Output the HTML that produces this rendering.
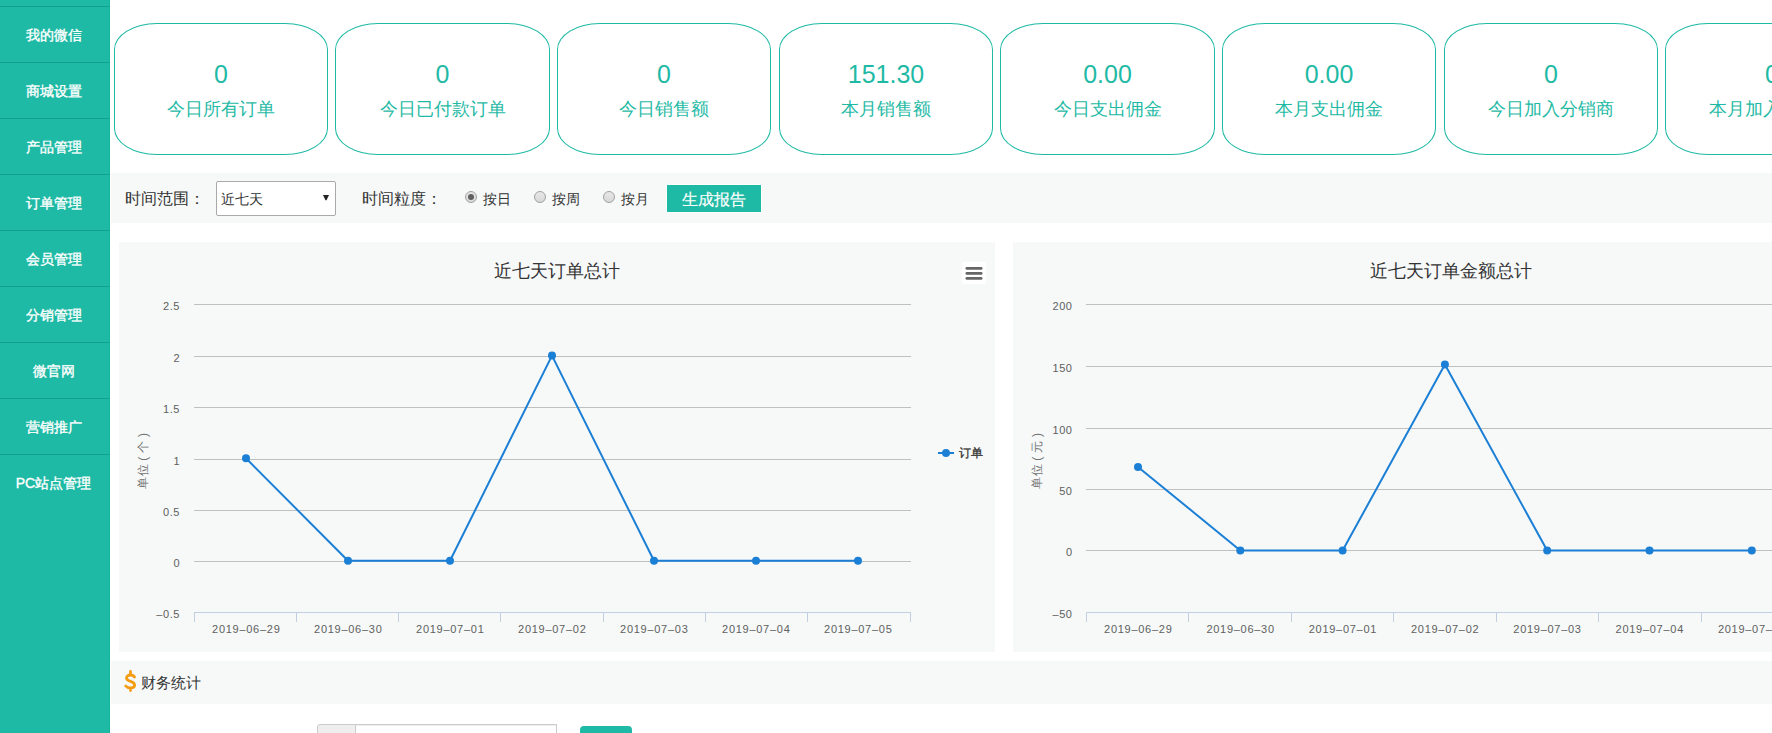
<!DOCTYPE html><html><head><meta charset="utf-8"><style>
*{box-sizing:border-box}
body{margin:0;width:1772px;height:733px;overflow:hidden;background:#fff;font-family:"Liberation Sans",sans-serif;position:relative}
.sb{position:absolute;left:0;top:0;width:110px;height:733px;background:#1fbaa5;border-right:1px solid #12b69d}
.sep{position:absolute;left:0;width:110px;height:1px;background:#14a08e}
.mi{position:absolute;left:0;width:107px;height:20px;line-height:20px;text-align:center;color:#fff;font-size:14px;-webkit-text-stroke:0.35px #fff}
.card{position:absolute;top:23px;width:214px;height:132px;border:1px solid #1fbaa5;border-radius:20%;color:#1fbaa5;text-align:center}
.num{position:absolute;left:0;width:100%;top:36px;font-size:25px;line-height:28px}
.lab{position:absolute;left:0;width:100%;top:73px;font-size:18px;line-height:24px;white-space:nowrap}
.bar{position:absolute;left:111px;width:1661px;background:#f6f9f8}
.t{position:absolute;white-space:nowrap;color:#333}
.panel{position:absolute;top:242px;width:876px;height:410px;background:#f6f9f8}
</style></head><body>

<div class="sb">
<div class="sep" style="top:6px"></div>
<div class="sep" style="top:62px"></div>
<div class="sep" style="top:118px"></div>
<div class="sep" style="top:174px"></div>
<div class="sep" style="top:230px"></div>
<div class="sep" style="top:286px"></div>
<div class="sep" style="top:342px"></div>
<div class="sep" style="top:398px"></div>
<div class="sep" style="top:454px"></div>
<div class="mi" style="top:25px">我的微信</div>
<div class="mi" style="top:81px">商城设置</div>
<div class="mi" style="top:137px">产品管理</div>
<div class="mi" style="top:193px">订单管理</div>
<div class="mi" style="top:249px">会员管理</div>
<div class="mi" style="top:305px">分销管理</div>
<div class="mi" style="top:361px">微官网</div>
<div class="mi" style="top:417px">营销推广</div>
<div class="mi" style="top:473px">PC站点管理</div>
</div>
<div class="card" style="left:114px;width:214px"><div class="num">0</div><div class="lab">今日所有订单</div></div>
<div class="card" style="left:335px;width:215px"><div class="num">0</div><div class="lab">今日已付款订单</div></div>
<div class="card" style="left:557px;width:214px"><div class="num">0</div><div class="lab">今日销售额</div></div>
<div class="card" style="left:779px;width:214px"><div class="num">151.30</div><div class="lab">本月销售额</div></div>
<div class="card" style="left:1000px;width:215px"><div class="num">0.00</div><div class="lab">今日支出佣金</div></div>
<div class="card" style="left:1222px;width:214px"><div class="num">0.00</div><div class="lab">本月支出佣金</div></div>
<div class="card" style="left:1444px;width:214px"><div class="num">0</div><div class="lab">今日加入分销商</div></div>
<div class="card" style="left:1665px;width:214px"><div class="num">0</div><div class="lab">本月加入分销商</div></div>
<div class="bar" style="top:173px;height:50px"></div>
<div class="t" style="left:125px;top:189px;font-size:16px;line-height:20px">时间范围：</div>
<div style="position:absolute;left:216px;top:181px;width:120px;height:35px;border:1px solid #a9a9a9;border-radius:2px;background:#fff"></div>
<div class="t" style="left:221px;top:190px;font-size:14px;line-height:18px">近七天</div>
<svg style="position:absolute;left:323px;top:195px" width="7" height="6"><path d="M0 0H6L3.5 5.2H2.5Z" fill="#222"/></svg>
<div class="t" style="left:362px;top:189px;font-size:16px;line-height:20px">时间粒度：</div>
<div style="position:absolute;left:465px;top:191px;width:12px;height:12px;border-radius:50%;border:1px solid #a0a0a0;background:linear-gradient(#e8e8e8,#d8d8d8)"></div>
<div style="position:absolute;left:468px;top:194px;width:6px;height:6px;border-radius:50%;background:#606060"></div>
<div class="t" style="left:483px;top:190px;font-size:14px;line-height:18px">按日</div>
<div style="position:absolute;left:534px;top:191px;width:12px;height:12px;border-radius:50%;border:1px solid #a0a0a0;background:linear-gradient(#e8e8e8,#d8d8d8)"></div>
<div class="t" style="left:552px;top:190px;font-size:14px;line-height:18px">按周</div>
<div style="position:absolute;left:603px;top:191px;width:12px;height:12px;border-radius:50%;border:1px solid #a0a0a0;background:linear-gradient(#e8e8e8,#d8d8d8)"></div>
<div class="t" style="left:621px;top:190px;font-size:14px;line-height:18px">按月</div>
<div style="position:absolute;left:666px;top:184px;width:96px;height:29px;border:1px solid #fff;background:#1fbaa5"></div>
<div class="t" style="left:682px;top:190px;font-size:16px;line-height:20px;color:#fff;-webkit-text-stroke:0.15px #fff">生成报告</div>
<div class="panel" style="left:119px">
<svg width="876" height="410" style="position:absolute;left:0;top:0;font-family:'Liberation Sans',sans-serif">
<text x="438" y="35" text-anchor="middle" font-size="18" fill="#333">近七天订单总计</text>
<rect x="75.0" y="62" width="717.0" height="1" fill="#c0c0c0"/>
<text x="61.1" y="67.8" text-anchor="end" font-size="11" letter-spacing="0.6" fill="#606060">2.5</text>
<rect x="75.0" y="114" width="717.0" height="1" fill="#c0c0c0"/>
<text x="61.1" y="119.8" text-anchor="end" font-size="11" letter-spacing="0.6" fill="#606060">2</text>
<rect x="75.0" y="165" width="717.0" height="1" fill="#c0c0c0"/>
<text x="61.1" y="170.8" text-anchor="end" font-size="11" letter-spacing="0.6" fill="#606060">1.5</text>
<rect x="75.0" y="217" width="717.0" height="1" fill="#c0c0c0"/>
<text x="61.1" y="222.8" text-anchor="end" font-size="11" letter-spacing="0.6" fill="#606060">1</text>
<rect x="75.0" y="268" width="717.0" height="1" fill="#c0c0c0"/>
<text x="61.1" y="273.8" text-anchor="end" font-size="11" letter-spacing="0.6" fill="#606060">0.5</text>
<rect x="75.0" y="319" width="717.0" height="1" fill="#c0c0c0"/>
<text x="61.1" y="324.8" text-anchor="end" font-size="11" letter-spacing="0.6" fill="#606060">0</text>
<text x="61.1" y="375.8" text-anchor="end" font-size="11" letter-spacing="0.6" fill="#606060">–0.5</text>
<rect x="75.0" y="370" width="717.0" height="1" fill="#c0d0e0"/>
<rect x="75" y="370" width="1" height="10" fill="#c0d0e0"/>
<rect x="177" y="370" width="1" height="10" fill="#c0d0e0"/>
<rect x="279" y="370" width="1" height="10" fill="#c0d0e0"/>
<rect x="381" y="370" width="1" height="10" fill="#c0d0e0"/>
<rect x="484" y="370" width="1" height="10" fill="#c0d0e0"/>
<rect x="586" y="370" width="1" height="10" fill="#c0d0e0"/>
<rect x="688" y="370" width="1" height="10" fill="#c0d0e0"/>
<rect x="791" y="370" width="1" height="10" fill="#c0d0e0"/>
<text x="127.3" y="391.1" text-anchor="middle" font-size="11" letter-spacing="0.72" fill="#606060">2019–06–29</text>
<text x="229.3" y="391.1" text-anchor="middle" font-size="11" letter-spacing="0.72" fill="#606060">2019–06–30</text>
<text x="331.3" y="391.1" text-anchor="middle" font-size="11" letter-spacing="0.72" fill="#606060">2019–07–01</text>
<text x="433.3" y="391.1" text-anchor="middle" font-size="11" letter-spacing="0.72" fill="#606060">2019–07–02</text>
<text x="535.3" y="391.1" text-anchor="middle" font-size="11" letter-spacing="0.72" fill="#606060">2019–07–03</text>
<text x="637.3" y="391.1" text-anchor="middle" font-size="11" letter-spacing="0.72" fill="#606060">2019–07–04</text>
<text x="739.3" y="391.1" text-anchor="middle" font-size="11" letter-spacing="0.72" fill="#606060">2019–07–05</text>
<text transform="translate(24.0,241.0) rotate(-90)" text-anchor="middle" dominant-baseline="central" font-size="12" fill="#707070">单</text>
<text transform="translate(24.0,228.0) rotate(-90)" text-anchor="middle" dominant-baseline="central" font-size="12" fill="#707070">位</text>
<text transform="translate(24.0,216.7) rotate(-90)" text-anchor="middle" dominant-baseline="central" font-size="12" fill="#707070">(</text>
<text transform="translate(24.0,205.3) rotate(-90)" text-anchor="middle" dominant-baseline="central" font-size="12" fill="#707070">个</text>
<text transform="translate(24.0,193.0) rotate(-90)" text-anchor="middle" dominant-baseline="central" font-size="12" fill="#707070">)</text>
<polyline points="127.0,216.3 229.0,318.8 331.0,318.8 433.0,113.6 535.0,318.8 637.0,318.8 739.0,318.8" fill="none" stroke="#1c7fd6" stroke-width="2" stroke-linejoin="round"/>
<circle cx="127.0" cy="216.3" r="4" fill="#1c7fd6"/>
<circle cx="229.0" cy="318.8" r="4" fill="#1c7fd6"/>
<circle cx="331.0" cy="318.8" r="4" fill="#1c7fd6"/>
<circle cx="433.0" cy="113.6" r="4" fill="#1c7fd6"/>
<circle cx="535.0" cy="318.8" r="4" fill="#1c7fd6"/>
<circle cx="637.0" cy="318.8" r="4" fill="#1c7fd6"/>
<circle cx="739.0" cy="318.8" r="4" fill="#1c7fd6"/>
<rect x="819" y="210" width="16" height="2" fill="#1c7fd6"/>
<circle cx="827" cy="211" r="4" fill="#1c7fd6"/>
<text x="840" y="214.5" font-size="12" fill="#333" stroke="#333" stroke-width="0.3">订单</text>
<rect x="843" y="20" width="24" height="22" rx="2" fill="#fff"/>
<rect x="846.5" y="25.0" width="17" height="2.7" rx="1.3" fill="#666"/>
<rect x="846.5" y="30.0" width="17" height="2.7" rx="1.3" fill="#666"/>
<rect x="846.5" y="35.1" width="17" height="2.7" rx="1.3" fill="#666"/>
</svg></div>
<div class="panel" style="left:1013px">
<svg width="876" height="410" style="position:absolute;left:0;top:0;font-family:'Liberation Sans',sans-serif">
<text x="438" y="35" text-anchor="middle" font-size="18" fill="#333">近七天订单金额总计</text>
<rect x="73.0" y="62" width="718.0" height="1" fill="#c0c0c0"/>
<text x="59.6" y="67.8" text-anchor="end" font-size="11" letter-spacing="0.6" fill="#606060">200</text>
<rect x="73.0" y="124" width="718.0" height="1" fill="#c0c0c0"/>
<text x="59.6" y="129.8" text-anchor="end" font-size="11" letter-spacing="0.6" fill="#606060">150</text>
<rect x="73.0" y="186" width="718.0" height="1" fill="#c0c0c0"/>
<text x="59.6" y="191.8" text-anchor="end" font-size="11" letter-spacing="0.6" fill="#606060">100</text>
<rect x="73.0" y="247" width="718.0" height="1" fill="#c0c0c0"/>
<text x="59.6" y="252.8" text-anchor="end" font-size="11" letter-spacing="0.6" fill="#606060">50</text>
<rect x="73.0" y="308" width="718.0" height="1" fill="#c0c0c0"/>
<text x="59.6" y="313.8" text-anchor="end" font-size="11" letter-spacing="0.6" fill="#606060">0</text>
<text x="59.6" y="375.8" text-anchor="end" font-size="11" letter-spacing="0.6" fill="#606060">–50</text>
<rect x="73.0" y="370" width="718.0" height="1" fill="#c0d0e0"/>
<rect x="73" y="370" width="1" height="10" fill="#c0d0e0"/>
<rect x="175" y="370" width="1" height="10" fill="#c0d0e0"/>
<rect x="278" y="370" width="1" height="10" fill="#c0d0e0"/>
<rect x="380" y="370" width="1" height="10" fill="#c0d0e0"/>
<rect x="483" y="370" width="1" height="10" fill="#c0d0e0"/>
<rect x="585" y="370" width="1" height="10" fill="#c0d0e0"/>
<rect x="688" y="370" width="1" height="10" fill="#c0d0e0"/>
<rect x="790" y="370" width="1" height="10" fill="#c0d0e0"/>
<text x="125.3" y="391.1" text-anchor="middle" font-size="11" letter-spacing="0.72" fill="#606060">2019–06–29</text>
<text x="227.6" y="391.1" text-anchor="middle" font-size="11" letter-spacing="0.72" fill="#606060">2019–06–30</text>
<text x="329.9" y="391.1" text-anchor="middle" font-size="11" letter-spacing="0.72" fill="#606060">2019–07–01</text>
<text x="432.2" y="391.1" text-anchor="middle" font-size="11" letter-spacing="0.72" fill="#606060">2019–07–02</text>
<text x="534.5" y="391.1" text-anchor="middle" font-size="11" letter-spacing="0.72" fill="#606060">2019–07–03</text>
<text x="636.8" y="391.1" text-anchor="middle" font-size="11" letter-spacing="0.72" fill="#606060">2019–07–04</text>
<text x="739.1" y="391.1" text-anchor="middle" font-size="11" letter-spacing="0.72" fill="#606060">2019–07–05</text>
<text transform="translate(24.0,241.0) rotate(-90)" text-anchor="middle" dominant-baseline="central" font-size="12" fill="#707070">单</text>
<text transform="translate(24.0,228.0) rotate(-90)" text-anchor="middle" dominant-baseline="central" font-size="12" fill="#707070">位</text>
<text transform="translate(24.0,216.7) rotate(-90)" text-anchor="middle" dominant-baseline="central" font-size="12" fill="#707070">(</text>
<text transform="translate(24.0,205.3) rotate(-90)" text-anchor="middle" dominant-baseline="central" font-size="12" fill="#707070">元</text>
<text transform="translate(24.0,193.0) rotate(-90)" text-anchor="middle" dominant-baseline="central" font-size="12" fill="#707070">)</text>
<polyline points="125.0,224.9 227.3,308.5 329.6,308.5 431.9,122.5 534.2,308.5 636.5,308.5 738.8,308.5" fill="none" stroke="#1c7fd6" stroke-width="2" stroke-linejoin="round"/>
<circle cx="125.0" cy="224.9" r="4" fill="#1c7fd6"/>
<circle cx="227.3" cy="308.5" r="4" fill="#1c7fd6"/>
<circle cx="329.6" cy="308.5" r="4" fill="#1c7fd6"/>
<circle cx="431.9" cy="122.5" r="4" fill="#1c7fd6"/>
<circle cx="534.2" cy="308.5" r="4" fill="#1c7fd6"/>
<circle cx="636.5" cy="308.5" r="4" fill="#1c7fd6"/>
<circle cx="738.8" cy="308.5" r="4" fill="#1c7fd6"/>
</svg></div>
<div class="bar" style="top:661px;height:43px"></div>
<svg style="position:absolute;left:124px;top:670px" width="13" height="22"><path d="M10.4 7C9.7 5.6 8.3 5 6.5 5C4.2 5 2.5 6.1 2.5 8C2.5 9.9 4.3 10.6 6.5 11.3C9 12.1 10.6 12.9 10.6 15C10.6 16.9 8.9 18 6.5 18C4.4 18 2.8 17.3 1.8 16M6.5 1.5V5M6.5 18V20.5" fill="none" stroke="#f39c12" stroke-width="2.8" stroke-linecap="round"/></svg>
<div class="t" style="left:141px;top:673px;font-size:15px;line-height:20px">财务统计</div>
<div style="position:absolute;left:355px;top:724px;width:202px;height:34px;border:1px solid #ccc;background:#fff;box-shadow:inset 0 1px 1px rgba(0,0,0,.075)"></div>
<div style="position:absolute;left:317px;top:724px;width:39px;height:34px;border:1px solid #ccc;border-right:1px solid #ccc;border-radius:3px 0 0 3px;background:#eee"></div>
<div style="position:absolute;left:580px;top:726px;width:52px;height:34px;border-radius:4px;background:#1fbaa5"></div>
</body></html>
